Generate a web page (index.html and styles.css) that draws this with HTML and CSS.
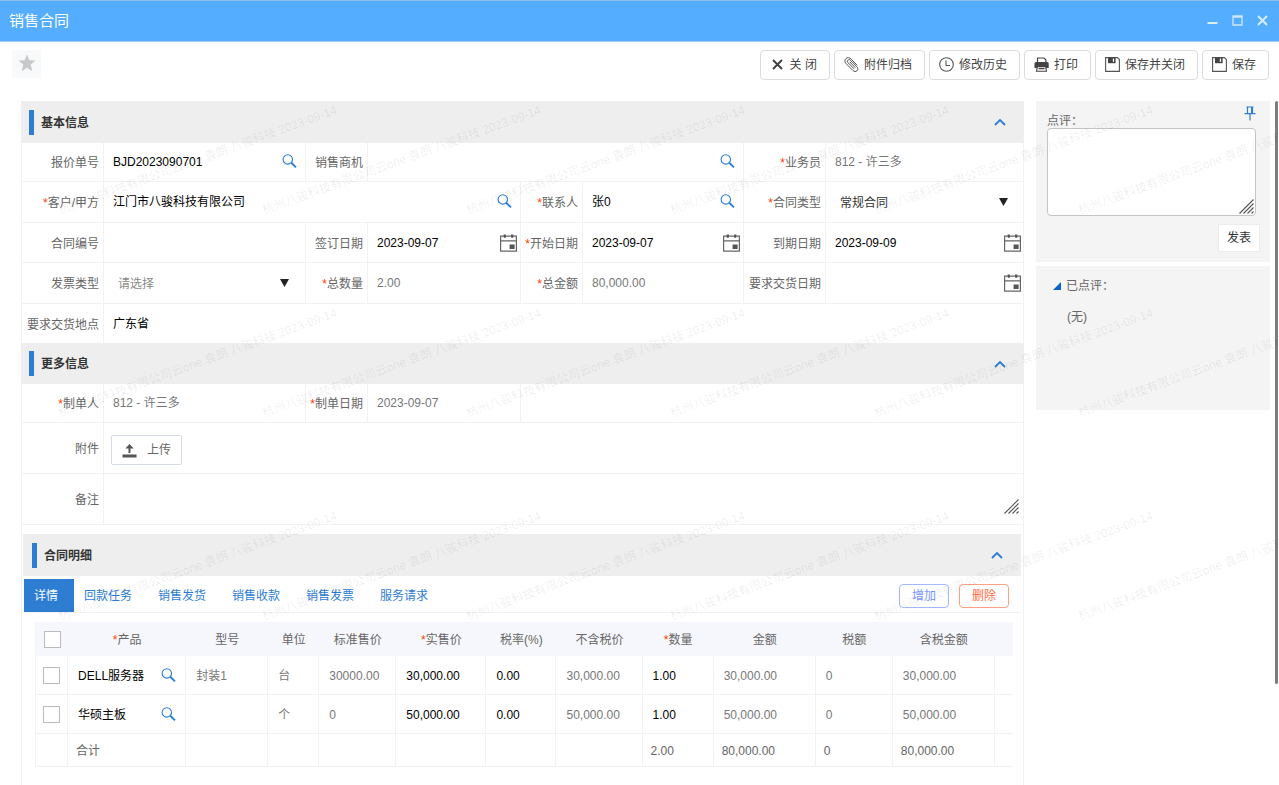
FILE: index.html
```
<!DOCTYPE html>
<html lang="zh-CN">
<head>
    <meta charset="UTF-8">
    <meta name="viewport" content="width=device-width, initial-scale=1.0">
    <title>销售合同</title>
    <link rel="stylesheet" href="styles.css">
</head>
<body>
    <svg class="sprite" aria-hidden="true">
        <symbol id="i-search" viewBox="0 0 15 15">
            <circle cx="5.8" cy="5.4" r="4.7" fill="none" stroke="#2d7dd2" stroke-width="1.1"/>
            <path d="M9.2 8.8l4.8 4.6" fill="none" stroke="#2d7dd2" stroke-width="1.9"/>
        </symbol>
        <symbol id="i-date" viewBox="0 0 17 18">
            <path d="M.6 2.2h15.8v15H.6zM.6 6.8h15.8" fill="none" stroke="#666" stroke-width="1.2"/>
            <path d="M3.7 .4h2.2v3.4H3.7zM11.1 .4h2.2v3.4h-2.2zM9.6 10.4h5v4.6h-5z" fill="#555"/>
        </symbol>
        <symbol id="i-down" viewBox="0 0 9 8">
            <path d="M0 0h9L4.5 8z" fill="#222"/>
        </symbol>
        <symbol id="i-up" viewBox="0 0 12 8">
            <path d="M1 7l5-5 5 5" fill="none" stroke="#2d7dd2" stroke-width="1.8"/>
        </symbol>
        <symbol id="i-grip" viewBox="0 0 15 15">
            <path d="M.5 14.5l14-14M4.5 14.5l10-10M8.5 14.5l6-6M12.5 14.5l2-2" fill="none" stroke="#555" stroke-width="1.1"/>
        </symbol>
        <symbol id="i-save" viewBox="0 0 15 15">
            <path d="M.6 .6h11.8l2 2v11.8H.6z" fill="none" stroke="#555" stroke-width="1.1"/>
            <path d="M3 .6h7.6v5.6H3z" fill="#444"/>
            <path d="M7.8 1.6h1.3v3.2H7.8z" fill="#fff"/>
        </symbol>
    </svg>

    <header class="titlebar">
        <h1>销售合同</h1>
        <div class="window-btns">
            <button aria-label="最小化"><svg width="11" height="11"><path d="M.5 8h10" stroke="#d9edff" stroke-width="2"/></svg></button>
            <button aria-label="最大化"><svg width="11" height="11"><path d="M1 1h9v9H1zM1 2h9" fill="none" stroke="#cfe8ff" stroke-width="1.3"/></svg></button>
            <button aria-label="关闭"><svg width="11" height="11"><path d="M1 1l9 9M10 1l-9 9" stroke="#d9edff" stroke-width="2"/></svg></button>
        </div>
    </header>

    <div class="toolbar">
        <button class="star" aria-label="收藏"><svg width="18" height="18" viewBox="0 0 18 18"><path d="M9 .4l2.3 5.8 6.3.4-4.9 4 1.6 6.6L9 13.8l-5.3 3.4 1.6-6.6-4.9-4 6.3-.4z" fill="#c8c8c8"/></svg></button>
        <div class="actions">
            <button class="btn"><svg width="11" height="11"><path d="M1 1l9 9M10 1l-9 9" stroke="#444" stroke-width="2"/></svg>关 闭</button>
            <button class="btn"><svg width="15" height="15"><path d="M13 8.200L7.200 2.100C5.600 .4 3.300 .2 1.900 1.600S.5 5 2.100 6.600l6.700 6.800c1.400 1.400 3.200 1.400 4.300.3s1-2.700-.3-4L6.600 3.400C5.700 2.500 4.600 2.400 3.900 3.100s-.6 1.700.2 2.600l6 6.200M5.700 4.800l5.700 6" fill="none" stroke="#555" stroke-width="1"/></svg>附件归档</button>
            <button class="btn"><svg width="15" height="15"><circle cx="7.5" cy="7.5" r="6.8" fill="none" stroke="#555" stroke-width="1.1"/><path d="M7 3.5v5h4" fill="none" stroke="#555" stroke-width="1.1"/></svg>修改历史</button>
            <button class="btn"><svg width="15" height="15"><path d="M3.500 5.500V1h6.500l1.800 1.800v2.700" fill="none" stroke="#444" stroke-width="1.2"/><path d="M2 5h11.200q1.500 0 1.500 1.500v4.600h-2.800V9H3.300v2.100H.5V6.500Q.5 5 2 5z" fill="#444"/><path d="M3.400 9.600l-.9 4.600h10l-.9-4.600zM4.500 11.600h6" fill="#fff" stroke="#444" stroke-width="1.100"/></svg>打印</button>
            <button class="btn"><svg width="15" height="15"><use href="#i-save"/></svg>保存并关闭</button>
            <button class="btn"><svg width="15" height="15"><use href="#i-save"/></svg>保存</button>
        </div>
    </div>

    <div class="page">
        <main class="panel">
            <section>
                <div class="section-head">
                    <h2>基本信息</h2>
                    <button aria-label="收起"><svg width="12" height="8"><use href="#i-up"/></svg></button>
                </div>
                <div class="form form-basic">
                    <label for="quote">报价单号</label>
                    <div class="field"><input id="quote" value="BJD2023090701"><button class="find" aria-label="查找"><svg width="15" height="15"><use href="#i-search"/></svg></button></div>
                    <label for="chance">销售商机</label>
                    <div class="field span-3"><input id="chance"><button class="find" aria-label="查找"><svg width="15" height="15"><use href="#i-search"/></svg></button></div>
                    <label for="sales"><i>*</i>业务员</label>
                    <div class="field last"><input id="sales" value="812 - 许三多" readonly></div>

                    <label for="customer"><i>*</i>客户/甲方</label>
                    <div class="field span-3"><input id="customer" value="江门市八骏科技有限公司"><button class="find" aria-label="查找"><svg width="15" height="15"><use href="#i-search"/></svg></button></div>
                    <label for="contact"><i>*</i>联系人</label>
                    <div class="field"><input id="contact" value="张0"><button class="find" aria-label="查找"><svg width="15" height="15"><use href="#i-search"/></svg></button></div>
                    <label for="ctype"><i>*</i>合同类型</label>
                    <div class="field last"><select id="ctype"><option>常规合同</option></select><svg class="arrow" width="9" height="8"><use href="#i-down"/></svg></div>

                    <label for="cno">合同编号</label>
                    <div class="field"><input id="cno"></div>
                    <label for="signed">签订日期</label>
                    <div class="field"><input id="signed" value="2023-09-07"><button class="date" aria-label="选择日期"><svg width="17" height="18"><use href="#i-date"/></svg></button></div>
                    <label for="start"><i>*</i>开始日期</label>
                    <div class="field"><input id="start" value="2023-09-07"><button class="date" aria-label="选择日期"><svg width="17" height="18"><use href="#i-date"/></svg></button></div>
                    <label for="end">到期日期</label>
                    <div class="field last"><input id="end" value="2023-09-09"><button class="date" aria-label="选择日期"><svg width="17" height="18"><use href="#i-date"/></svg></button></div>

                    <label for="invoice">发票类型</label>
                    <div class="field"><select id="invoice" class="empty"><option>请选择</option></select><svg class="arrow" width="9" height="8"><use href="#i-down"/></svg></div>
                    <label for="qty"><i>*</i>总数量</label>
                    <div class="field"><input id="qty" value="2.00" readonly></div>
                    <label for="amount"><i>*</i>总金额</label>
                    <div class="field"><input id="amount" value="80,000.00" readonly></div>
                    <label for="delivery">要求交货日期</label>
                    <div class="field last"><input id="delivery"><button class="date" aria-label="选择日期"><svg width="17" height="18"><use href="#i-date"/></svg></button></div>

                    <label for="place">要求交货地点</label>
                    <div class="field span-7 last"><input id="place" value="广东省"></div>
                </div>
            </section>

            <section>
                <div class="section-head head-more">
                    <h2>更多信息</h2>
                    <button aria-label="收起"><svg width="12" height="8"><use href="#i-up"/></svg></button>
                </div>
                <div class="form form-more">
                    <label for="maker"><i>*</i>制单人</label>
                    <div class="field"><input id="maker" value="812 - 许三多" readonly></div>
                    <label for="made"><i>*</i>制单日期</label>
                    <div class="field"><input id="made" value="2023-09-07" readonly></div>
                    <div class="field span-4 last"></div>

                    <label for="upload">附件</label>
                    <div class="field span-7 last"><button class="upload" id="upload"><svg width="15" height="15"><path d="M7.500 1L3.300 5.500h3.200V10h2V5.500h3.200zM.5 11.500h14v3H.5z" fill="#555"/></svg>上传</button></div>

                    <label for="remark">备注</label>
                    <div class="field span-7 last grip-box"><textarea id="remark"></textarea><svg class="grip" width="15" height="15"><use href="#i-grip"/></svg></div>
                </div>
            </section>

            <section class="detail">
                <div class="section-head">
                    <h2>合同明细</h2>
                    <button aria-label="收起"><svg width="12" height="8"><use href="#i-up"/></svg></button>
                </div>
                <div class="tabs">
                    <a class="active" href="#">详情</a>
                    <a href="#">回款任务</a>
                    <a href="#">销售发货</a>
                    <a href="#">销售收款</a>
                    <a href="#">销售发票</a>
                    <a href="#">服务请求</a>
                    <div class="tab-btns">
                        <button class="add">增加</button>
                        <button class="del">删除</button>
                    </div>
                </div>
                <table>
                    <colgroup>
                        <col class="c-check"><col class="c-product"><col class="c-model"><col class="c-unit"><col class="c-std"><col class="c-price"><col class="c-rate"><col class="c-net"><col class="c-qty"><col class="c-sum"><col class="c-tax"><col class="c-sum"><col class="c-end">
                    </colgroup>
                    <thead>
                        <tr>
                            <th><input type="checkbox" aria-label="全选"></th>
                            <th><i>*</i>产品</th>
                            <th>型号</th>
                            <th>单位</th>
                            <th>标准售价</th>
                            <th><i>*</i>实售价</th>
                            <th>税率(%)</th>
                            <th>不含税价</th>
                            <th><i>*</i>数量</th>
                            <th>金额</th>
                            <th>税额</th>
                            <th>含税金额</th>
                            <th></th>
                        </tr>
                    </thead>
                    <tbody>
                        <tr>
                            <td class="check"><input type="checkbox" aria-label="选择 DELL服务器"></td>
                            <td class="product"><div><span>DELL服务器</span><button aria-label="查找"><svg width="15" height="15"><use href="#i-search"/></svg></button></div></td>
                            <td>封装1</td>
                            <td>台</td>
                            <td>30000.00</td>
                            <td class="edit">30,000.00</td>
                            <td class="edit">0.00</td>
                            <td>30,000.00</td>
                            <td class="edit">1.00</td>
                            <td>30,000.00</td>
                            <td>0</td>
                            <td>30,000.00</td>
                            <td></td>
                        </tr>
                        <tr>
                            <td class="check"><input type="checkbox" aria-label="选择 华硕主板"></td>
                            <td class="product"><div><span>华硕主板</span><button aria-label="查找"><svg width="15" height="15"><use href="#i-search"/></svg></button></div></td>
                            <td></td>
                            <td>个</td>
                            <td>0</td>
                            <td class="edit">50,000.00</td>
                            <td class="edit">0.00</td>
                            <td>50,000.00</td>
                            <td class="edit">1.00</td>
                            <td>50,000.00</td>
                            <td>0</td>
                            <td>50,000.00</td>
                            <td></td>
                        </tr>
                    </tbody>
                    <tfoot>
                        <tr>
                            <td></td>
                            <td>合计</td>
                            <td></td>
                            <td></td>
                            <td></td>
                            <td></td>
                            <td></td>
                            <td></td>
                            <td>2.00</td>
                            <td>80,000.00</td>
                            <td>0</td>
                            <td>80,000.00</td>
                            <td></td>
                        </tr>
                    </tfoot>
                </table>
            </section>
        </main>

        <aside class="side">
            <div class="comment">
                <button class="pin" aria-label="固定"><svg width="12" height="15"><path d="M3.500 7V1h5v6M.5 7.600h11M6 8v6.500M2.500 1h7" fill="none" stroke="#2d7dd2" stroke-width="1.200"/><path d="M7 1h2v6H7z" fill="#2d7dd2"/></svg></button>
                <label for="comment">点评：</label>
                <div class="grip-box"><textarea id="comment"></textarea><svg class="grip" width="15" height="15"><use href="#i-grip"/></svg></div>
                <button class="post">发表</button>
            </div>
            <div class="comment-list">
                <h3><svg width="8" height="8"><path d="M8 0v8H0z" fill="#0a62d0"/></svg>已点评：</h3>
                <p>(无)</p>
            </div>
        </aside>
        <div class="scrollbar"></div>
    </div>

    <div class="watermark" id="watermark" aria-hidden="true"></div>

    <script>
        const watermark = document.getElementById('watermark');
        for (let i = 0; i < 18; i++) {
            const mark = document.createElement('span');
            mark.textContent = '杭州八骏科技有限公司云one 袁朗 八骏科技 2023-09-14';
            watermark.appendChild(mark);
        }
    </script>
</body>
</html>
```
FILE: styles.css
```
* {
    box-sizing: border-box;
    margin: 0;
    padding: 0;
}

body {
    position: relative;
    display: flex;
    flex-direction: column;
    min-height: 100vh;
    overflow: hidden;
    background-color: #fff;
    color: #666;
    font-family: "Liberation Sans", "Noto Sans CJK SC", sans-serif;
    font-size: 12px;
    line-height: 18px;
}

button, input, select, textarea {
    font: inherit;
    color: inherit;
    border: none;
    background: none;
    outline: none;
}

button {
    cursor: pointer;
}

svg {
    display: block;
    flex: none;
}

i {
    color: #ff3c00;
    font-style: normal;
}

.sprite {
    position: absolute;
    width: 0;
    height: 0;
}

/* title bar */
.titlebar {
    display: flex;
    align-items: center;
    justify-content: space-between;
    height: 42px;
    padding: 0 11px 0 9px;
    background-color: #55adff;
    border-top: 1px solid #8fbde6;
    border-bottom: 1px solid #9dd0ff;
}

.titlebar h1 {
    color: #fff;
    font-size: 15px;
    font-weight: normal;
}

.window-btns {
    display: flex;
    gap: 14px;
    padding-bottom: 2px;
}

/* toolbar */
.toolbar {
    display: flex;
    justify-content: space-between;
    align-items: flex-start;
    height: 59px;
    padding: 8px 10px 0 12px;
}

.star {
    display: grid;
    place-items: center;
    width: 29px;
    height: 28px;
    padding-bottom: 2px;
    background-color: #f8f9fb;
}

.actions {
    display: flex;
    gap: 4px;
}

.btn {
    display: flex;
    align-items: center;
    gap: 5px;
    height: 30px;
    padding: 0 12px 0 9px;
    color: #444;
    border: 1px solid #dcdcdc;
    border-radius: 4px;
}

.btn svg {
    margin-bottom: 2px;
}

.btn:first-child {
    gap: 7px;
    padding-left: 11px;
}

/* page */
.page {
    flex: 1;
    display: flex;
    align-items: flex-start;
    padding-left: 21px;
}

.panel {
    flex: 1;
    align-self: stretch;
    min-width: 0;
    box-shadow: inset 1px 0 #f2f2f2, inset -1px 0 #f2f2f2;
}

.section-head {
    display: flex;
    align-items: center;
    justify-content: space-between;
    height: 42px;
    padding: 0 18px 0 8px;
    background-color: #eee;
}

.head-more {
    height: 41px;
}

.section-head h2 {
    height: 25px;
    padding-left: 7px;
    color: #333;
    font-size: 12px;
    line-height: 27px;
    border-left: 5px solid #2d7dd2;
}

.form {
    display: grid;
    grid-template-columns: 83px 202fr 62px 153fr 62px 161fr 82px 198fr;
}

.form-basic {
    grid-template-rows: 39px 41px 40px 41px 39px;
}

.form-more {
    grid-template-rows: 39px 51px 51px;
}

.form > label, .field {
    display: flex;
    align-items: center;
    min-width: 0;
    border-right: 1px solid #f2f2f2;
    border-bottom: 1px solid #f2f2f2;
}

.form > label {
    justify-content: flex-end;
    padding: 2px 4px 0 0;
    white-space: nowrap;
}

.field {
    position: relative;
}

.form .last {
    border-right: none;
}

.form-basic .span-7, .form-basic label:nth-last-child(2) {
    border-bottom: none;
}

.span-3 {
    grid-column: span 3;
}

.span-4 {
    grid-column: span 4;
}

.span-7 {
    grid-column: span 7;
}

.field input, .field select {
    flex: 1;
    min-width: 0;
    padding-left: 9px;
    color: #000;
}

.field input[readonly] {
    color: #777;
}

.field select {
    appearance: none;
    padding-left: 14px;
    padding-top: 1px;
    color: #333;
}

.field select.empty {
    color: #888;
}

.arrow {
    margin-right: 16px;
}

.find {
    margin-right: 8px;
    padding-bottom: 2px;
}

.date {
    margin-right: 3px;
}

.upload {
    display: flex;
    align-items: center;
    gap: 10px;
    height: 30px;
    margin: 3px 0 0 7px;
    padding: 1px 10px 0;
    border: 1px solid #d5dce8;
    border-radius: 2px;
}

.grip-box {
    position: relative;
}

.grip-box textarea {
    display: block;
    width: 100%;
    height: 100%;
    padding: 6px 9px;
    resize: none;
}

.grip {
    position: absolute;
    right: 5px;
    bottom: 10px;
}

/* detail section */
.detail {
    margin: 9px 3px 0 2px;
}

.detail .section-head {
    padding-left: 9px;
}

.tabs {
    display: flex;
    align-items: stretch;
    height: 37px;
    padding: 3px 12px 0 1px;
    border-bottom: 1px solid #f2f2f2;
}

.tabs a {
    padding: 0 16px 0 10px;
    line-height: 34px;
    color: #2d7dd2;
    text-decoration: none;
}

.tabs .active {
    color: #fff;
    background-color: #2d7dd2;
}

.tab-btns {
    display: flex;
    align-items: center;
    gap: 10px;
    margin-left: auto;
}

.tab-btns button {
    width: 50px;
    height: 24px;
    padding-top: 1px;
    border: 1px solid;
    border-radius: 4px;
}

.tab-btns .add {
    color: #7a98fc;
    border-color: #a3b8ff;
}

.tab-btns .del {
    color: #ff6b45;
    border-color: #ff9f85;
}

table {
    width: calc(100% - 20px);
    margin: 9px 8px 0 12px;
    table-layout: fixed;
    border-collapse: separate;
    border-spacing: 0;
    border-left: 1px solid #f2f2f2;
}

.c-check { width: 32px; }
.c-product { width: 118px; }
.c-model { width: 82px; }
.c-unit { width: 51px; }
.c-std { width: 77px; }
.c-price { width: 90px; }
.c-rate { width: 70px; }
.c-net { width: 86px; }
.c-qty { width: 71px; }
.c-sum { width: 102px; }
.c-tax { width: 77px; }
.c-end { width: 18px; }

th {
    height: 34px;
    padding-top: 1px;
    font-weight: normal;
    background-color: #f6f7fc;
}

td {
    height: 39px;
    padding: 2px 0 0 10px;
    color: #777;
    border-right: 1px solid #f2f2f2;
    border-bottom: 1px solid #f2f2f2;
}

td:last-child {
    border-right: none;
}

td.check {
    padding: 0;
}

.edit, td.product {
    color: #000;
}

.product div {
    display: flex;
    align-items: center;
    justify-content: space-between;
    padding-right: 9px;
}

.product button {
    padding-bottom: 2px;
}

tfoot td {
    height: 33px;
    padding-left: 8px;
    color: #666;
}

input[type="checkbox"] {
    display: block;
    width: 17px;
    height: 17px;
    margin: 0 auto;
    appearance: none;
    background-color: #fff;
    border: 1px solid #bbb;
}

/* comments */
.side {
    flex: none;
    width: 234px;
    margin-left: 12px;
}

.comment {
    position: relative;
    display: flex;
    flex-direction: column;
    height: 161px;
    padding: 10px 14px 0 11px;
    background-color: #f4f4f4;
}

.comment label {
    height: 17px;
    line-height: 20px;
}

.comment .grip-box {
    height: 88px;
}

.comment textarea {
    background-color: #fff;
    border: 1px solid #c4c4c4;
    border-radius: 4px;
}

.comment .grip {
    right: 2px;
    bottom: 2px;
}

.pin {
    position: absolute;
    top: 5px;
    right: 14px;
}

.post {
    align-self: flex-end;
    width: 42px;
    height: 28px;
    margin: 8px -4px 0 0;
    color: #333;
    background-color: #fff;
    border: 1px solid #ececec;
}

.comment-list {
    height: 144px;
    margin-top: 4px;
    padding: 11px 17px;
    background-color: #f4f4f4;
}

.comment-list h3 {
    display: flex;
    align-items: center;
    gap: 5px;
    font-size: 12px;
    font-weight: normal;
}

.comment-list p {
    padding: 13px 14px 0;
}

.scrollbar {
    width: 3px;
    height: 583px;
    margin: 0 1px 0 5px;
    background-color: #7d7d7d;
    border-radius: 2px;
}

/* watermark lies over the whole window */
.watermark {
    position: absolute;
    top: 201px;
    left: 62px;
    right: 0;
    bottom: 0;
    display: grid;
    grid-template-columns: repeat(6, 204px);
    grid-auto-rows: 203px;
    color: rgba(0, 0, 0, 0.08);
    pointer-events: none;
}

.watermark span {
    justify-self: start;
    align-self: start;
    white-space: nowrap;
    transform: rotate(-20deg);
    transform-origin: left bottom;
}
```
